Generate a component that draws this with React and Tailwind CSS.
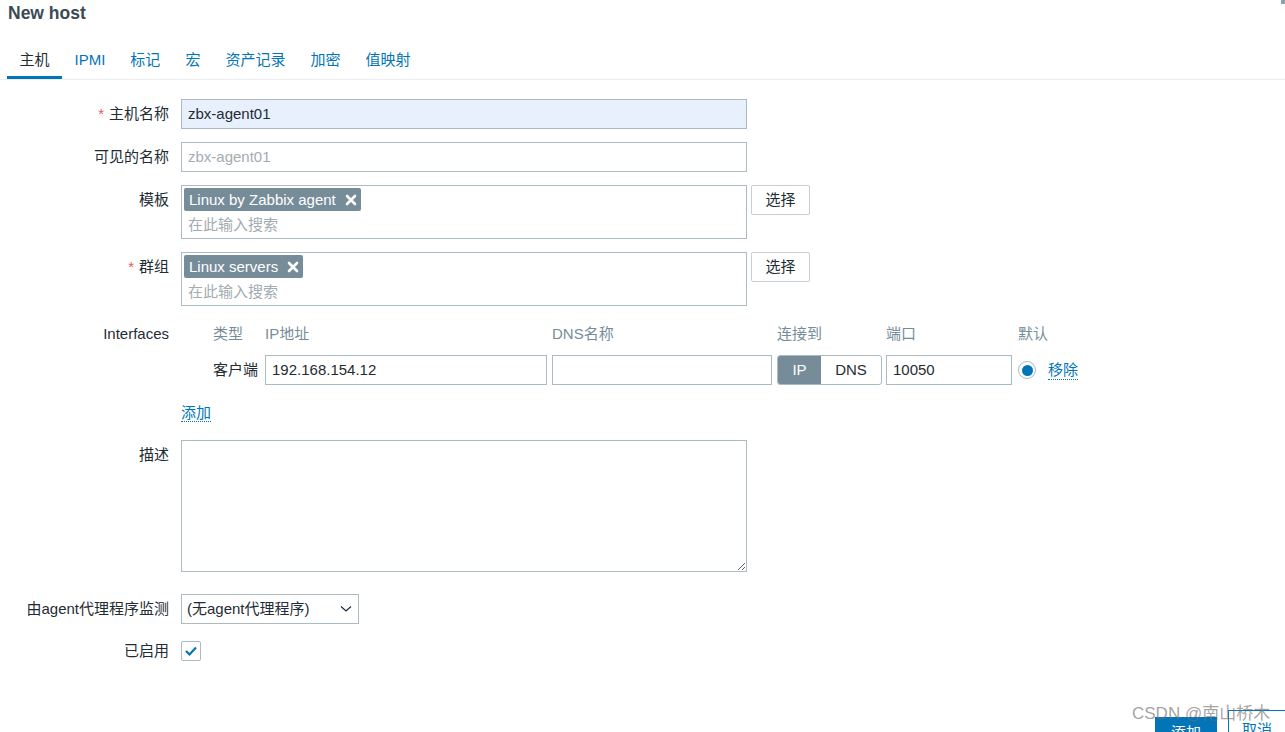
import React from 'react';

const tabs = ['主机', 'IPMI', '标记', '宏', '资产记录', '加密', '值映射'];

const Label = ({ children, required, lh = 'leading-[30px]' }) => (
  <div className={`w-[169px] shrink-0 text-right whitespace-nowrap ${lh}`}>
    {required && <span className="text-[#e45959] mr-[5px]">*</span>}
    {children}
  </div>
);

const Tag = ({ text }) => (
  <span className="inline-flex h-[23px] items-center rounded-[2px] bg-[#768d99] pl-[5px] pr-[4px] text-white leading-[23px]">
    {text}
    <svg className="ml-[9px]" width="12" height="12" viewBox="0 0 12 12">
      <path d="M2 2 L10 10 M10 2 L2 10" stroke="#fff" strokeWidth="2.6" strokeLinecap="round" />
    </svg>
  </span>
);

const MultiSelect = ({ tag }) => (
  <div className="flex items-start">
    <div className="h-[54px] w-[566px] border border-[#acbbc2] p-[2px]">
      <Tag text={tag} />
      <div className="mt-[3px] pl-[4px] leading-[20px] text-[#a3acb1]">在此输入搜索</div>
    </div>
    <button className="ml-[4px] h-[30px] w-[59px] rounded-[2px] border border-[#c5cfd4] bg-white text-[#1f2c33]">选择</button>
  </div>
);

const App = () => {
  return (
    <div className="relative h-[732px] w-[1285px] overflow-hidden bg-white font-['Liberation_Sans','Noto_Sans_CJK_SC',sans-serif] text-[15px] text-[#1f2c33]">
      <h1 className="pl-2 pt-[2px] text-[17.5px] font-bold leading-[22px] text-[#3b4a54]">New host</h1>

      {/* tabs */}
      <div className="mt-[16px] flex border-b border-[#ebeef0] pl-[7px]">
        {tabs.map((t, i) => (
          <div
            key={t}
            className={`px-[12.5px] pt-[10px] pb-[6px] leading-[20px] border-b-[3px] ${i === 0 ? 'border-[#0275b8] text-[#1f2c33]' : 'border-transparent text-[#0275b8]'}`}
          >
            {t}
          </div>
        ))}
      </div>

      <div className="pt-[19px]">
        <div className="flex gap-3">
          <Label required>主机名称</Label>
          <div className="flex h-[30px] w-[566px] items-center border border-[#acbbc2] bg-[#e8f0fe] px-[6px]">zbx-agent01</div>
        </div>

        <div className="mt-[13px] flex gap-3">
          <Label>可见的名称</Label>
          <div className="flex h-[30px] w-[566px] items-center border border-[#acbbc2] px-[6px] text-[#a3acb1]">zbx-agent01</div>
        </div>

        <div className="mt-[13px] flex gap-3">
          <Label>模板</Label>
          <MultiSelect tag="Linux by Zabbix agent" />
        </div>

        <div className="mt-[13px] flex gap-3">
          <Label required>群组</Label>
          <MultiSelect tag="Linux servers" />
        </div>

        {/* interfaces */}
        <div className="mt-[17px] flex gap-3">
          <Label lh="leading-[22px]">Interfaces</Label>
          <div>
            <div className="flex pl-[32px] leading-[22px] text-[#768d99]">
              <span className="w-[52px]">类型</span>
              <span className="w-[287px]">IP地址</span>
              <span className="w-[225px]">DNS名称</span>
              <span className="w-[109px]">连接到</span>
              <span className="w-[132px]">端口</span>
              <span>默认</span>
            </div>
            <div className="mt-[10px] flex items-center pl-[32px]">
              <span className="w-[52px] leading-[30px]">客户端</span>
              <div className="w-[287px]">
                <div className="flex h-[30px] w-[282px] items-center border border-[#acbbc2] px-[6px]">192.168.154.12</div>
              </div>
              <div className="w-[225px]">
                <div className="h-[30px] w-[220px] border border-[#acbbc2]" />
              </div>
              <div className="w-[109px]">
                <div className="flex h-[30px] w-[105px] overflow-hidden rounded-[3px] border border-[#acbbc2]">
                  <span className="flex w-[43px] items-center justify-center bg-[#768d99] text-white">IP</span>
                  <span className="flex flex-1 items-center justify-center">DNS</span>
                </div>
              </div>
              <div className="w-[132px]">
                <div className="flex h-[30px] w-[126px] items-center border border-[#acbbc2] px-[6px]">10050</div>
              </div>
              <div className="flex h-[18px] w-[18px] items-center justify-center rounded-full border border-[#acbbc2]">
                <div className="h-[11px] w-[11px] rounded-full bg-[#0275b8]" />
              </div>
              <span className="ml-[12px] border-b border-dotted border-[#0275b8] leading-[19px] text-[#0275b8]">移除</span>
            </div>
            <div className="mt-[18px] leading-[20px]">
              <span className="border-b border-dotted border-[#0275b8] text-[#0275b8]">添加</span>
            </div>
          </div>
        </div>

        <div className="mt-[17px] flex gap-3">
          <Label>描述</Label>
          <textarea className="block h-[132px] w-[566px] border border-[#acbbc2] outline-none" />
        </div>

        <div className="mt-[22px] flex gap-3">
          <Label>由agent代理程序监测</Label>
          <div className="flex h-[30px] w-[178px] items-center justify-between border border-[#acbbc2] pl-[5px] pr-[6px]">
            <span>(无agent代理程序)</span>
            <svg width="12" height="8" viewBox="0 0 12 8">
              <path d="M1 1.5 L6 6 L11 1.5" fill="none" stroke="#1f2c33" strokeWidth="1.2" />
            </svg>
          </div>
        </div>

        <div className="mt-[17px] flex items-center gap-3">
          <Label lh="leading-[20px]">已启用</Label>
          <div className="flex h-[20px] w-[20px] items-center justify-center rounded-[2px] border border-[#acbbc2]">
            <svg width="14" height="12" viewBox="0 0 14 12">
              <path d="M2 6 L5.5 9.5 L12 2.5" fill="none" stroke="#0275b8" strokeWidth="2.2" />
            </svg>
          </div>
        </div>

        {/* footer */}
        <div className="mt-[49px] flex justify-end">
          <button className="mt-[7px] h-[30px] w-[62px] self-start bg-[#0275b8] pt-[1px] leading-[20px] text-white">添加</button>
          <button className="ml-[11px] -mr-[13px] h-[30px] w-[70px] shrink-0 border-l border-t border-[#0275b8] pl-[13px] pt-[8px] text-left leading-[20px] text-[#0275b8]">取消</button>
        </div>
      </div>

      <div className="absolute right-0 top-0 h-[4px] w-[4px] bg-[#8fa0ab]" />
      <div className="pointer-events-none absolute left-[1132px] top-[703px] text-[17px] leading-[22px] text-[rgba(110,110,110,0.65)]">CSDN @南山桥木</div>
    </div>
  );
};

export default App;
